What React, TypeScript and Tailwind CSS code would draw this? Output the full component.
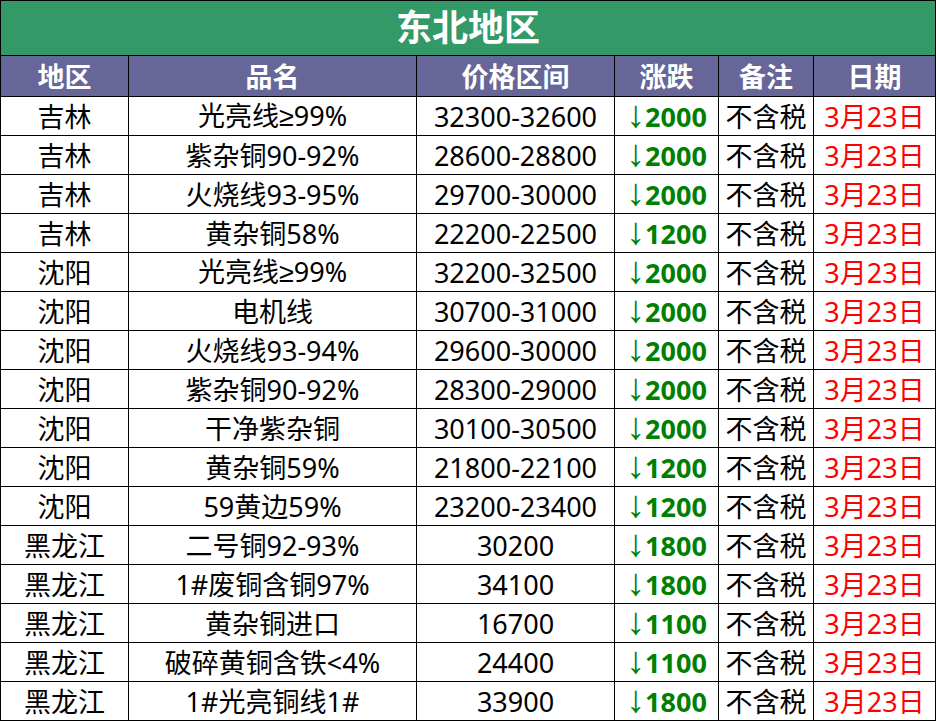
const rows: [string, string, string, string][] = [
  ["吉林", "光亮线≥99%", "32300-32600", "2000"],
  ["吉林", "紫杂铜90-92%", "28600-28800", "2000"],
  ["吉林", "火烧线93-95%", "29700-30000", "2000"],
  ["吉林", "黄杂铜58%", "22200-22500", "1200"],
  ["沈阳", "光亮线≥99%", "32200-32500", "2000"],
  ["沈阳", "电机线", "30700-31000", "2000"],
  ["沈阳", "火烧线93-94%", "29600-30000", "2000"],
  ["沈阳", "紫杂铜90-92%", "28300-29000", "2000"],
  ["沈阳", "干净紫杂铜", "30100-30500", "2000"],
  ["沈阳", "黄杂铜59%", "21800-22100", "1200"],
  ["沈阳", "59黄边59%", "23200-23400", "1200"],
  ["黑龙江", "二号铜92-93%", "30200", "1800"],
  ["黑龙江", "1#废铜含铜97%", "34100", "1800"],
  ["黑龙江", "黄杂铜进口", "16700", "1100"],
  ["黑龙江", "破碎黄铜含铁<4%", "24400", "1100"],
  ["黑龙江", "1#光亮铜线1#", "33900", "1800"],
];

const headers = ["地区", "品名", "价格区间", "涨跌", "备注", "日期"];

// ≥ 单独用 Liberation Sans，避免 CJK 字体里的斜体形状
function Name({ text }: { text: string }) {
  const parts = text.split("≥");
  if (parts.length === 1) return <>{text}</>;
  return (
    <>
      {parts[0]}
      <span className="font-['Liberation_Sans','DejaVu_Sans',sans-serif]">≥</span>
      {parts[1]}
    </>
  );
}

export default function App() {
  return (
    <div className="w-[936px] h-[721px] bg-white overflow-hidden font-['Noto_Sans','Noto_Sans_CJK_SC',sans-serif]">
      <table className="w-[935px] table-fixed border-collapse">
        <colgroup>
          <col className="w-[128px]" />
          <col className="w-[288px]" />
          <col className="w-[198px]" />
          <col className="w-[104px]" />
          <col className="w-[95px]" />
          <col className="w-[122px]" />
        </colgroup>
        <thead>
          <tr className="h-[55px]">
            <th colSpan={6} className="border border-black bg-[#339966] text-white text-[36px] font-bold leading-none p-0">
              东北地区
            </th>
          </tr>
          <tr className="h-[41px]">
            {headers.map((h) => (
              <th key={h} className="border border-black bg-[#666699] text-white text-[27px] font-bold leading-none p-0">
                {h}
              </th>
            ))}
          </tr>
        </thead>
        <tbody>
          {rows.map((r, i) => (
            <tr key={i} className="h-[39px] text-[27px] leading-none text-black">
              <td className="border border-black text-center p-0">{r[0]}</td>
              <td className="border border-black text-center p-0">
                <Name text={r[1]} />
              </td>
              <td className="border border-black text-center p-0">{r[2]}</td>
              <td className="border border-black text-center p-0 text-[#008000] font-bold whitespace-nowrap">
                <span className="font-normal text-[38px] leading-[0] font-['Liberation_Sans','DejaVu_Sans',sans-serif]">↓</span>
                {r[3]}
              </td>
              <td className="border border-black text-center p-0">不含税</td>
              <td className="border border-black text-center p-0 text-[#ff0000]">3月23日</td>
            </tr>
          ))}
        </tbody>
      </table>
    </div>
  );
}
